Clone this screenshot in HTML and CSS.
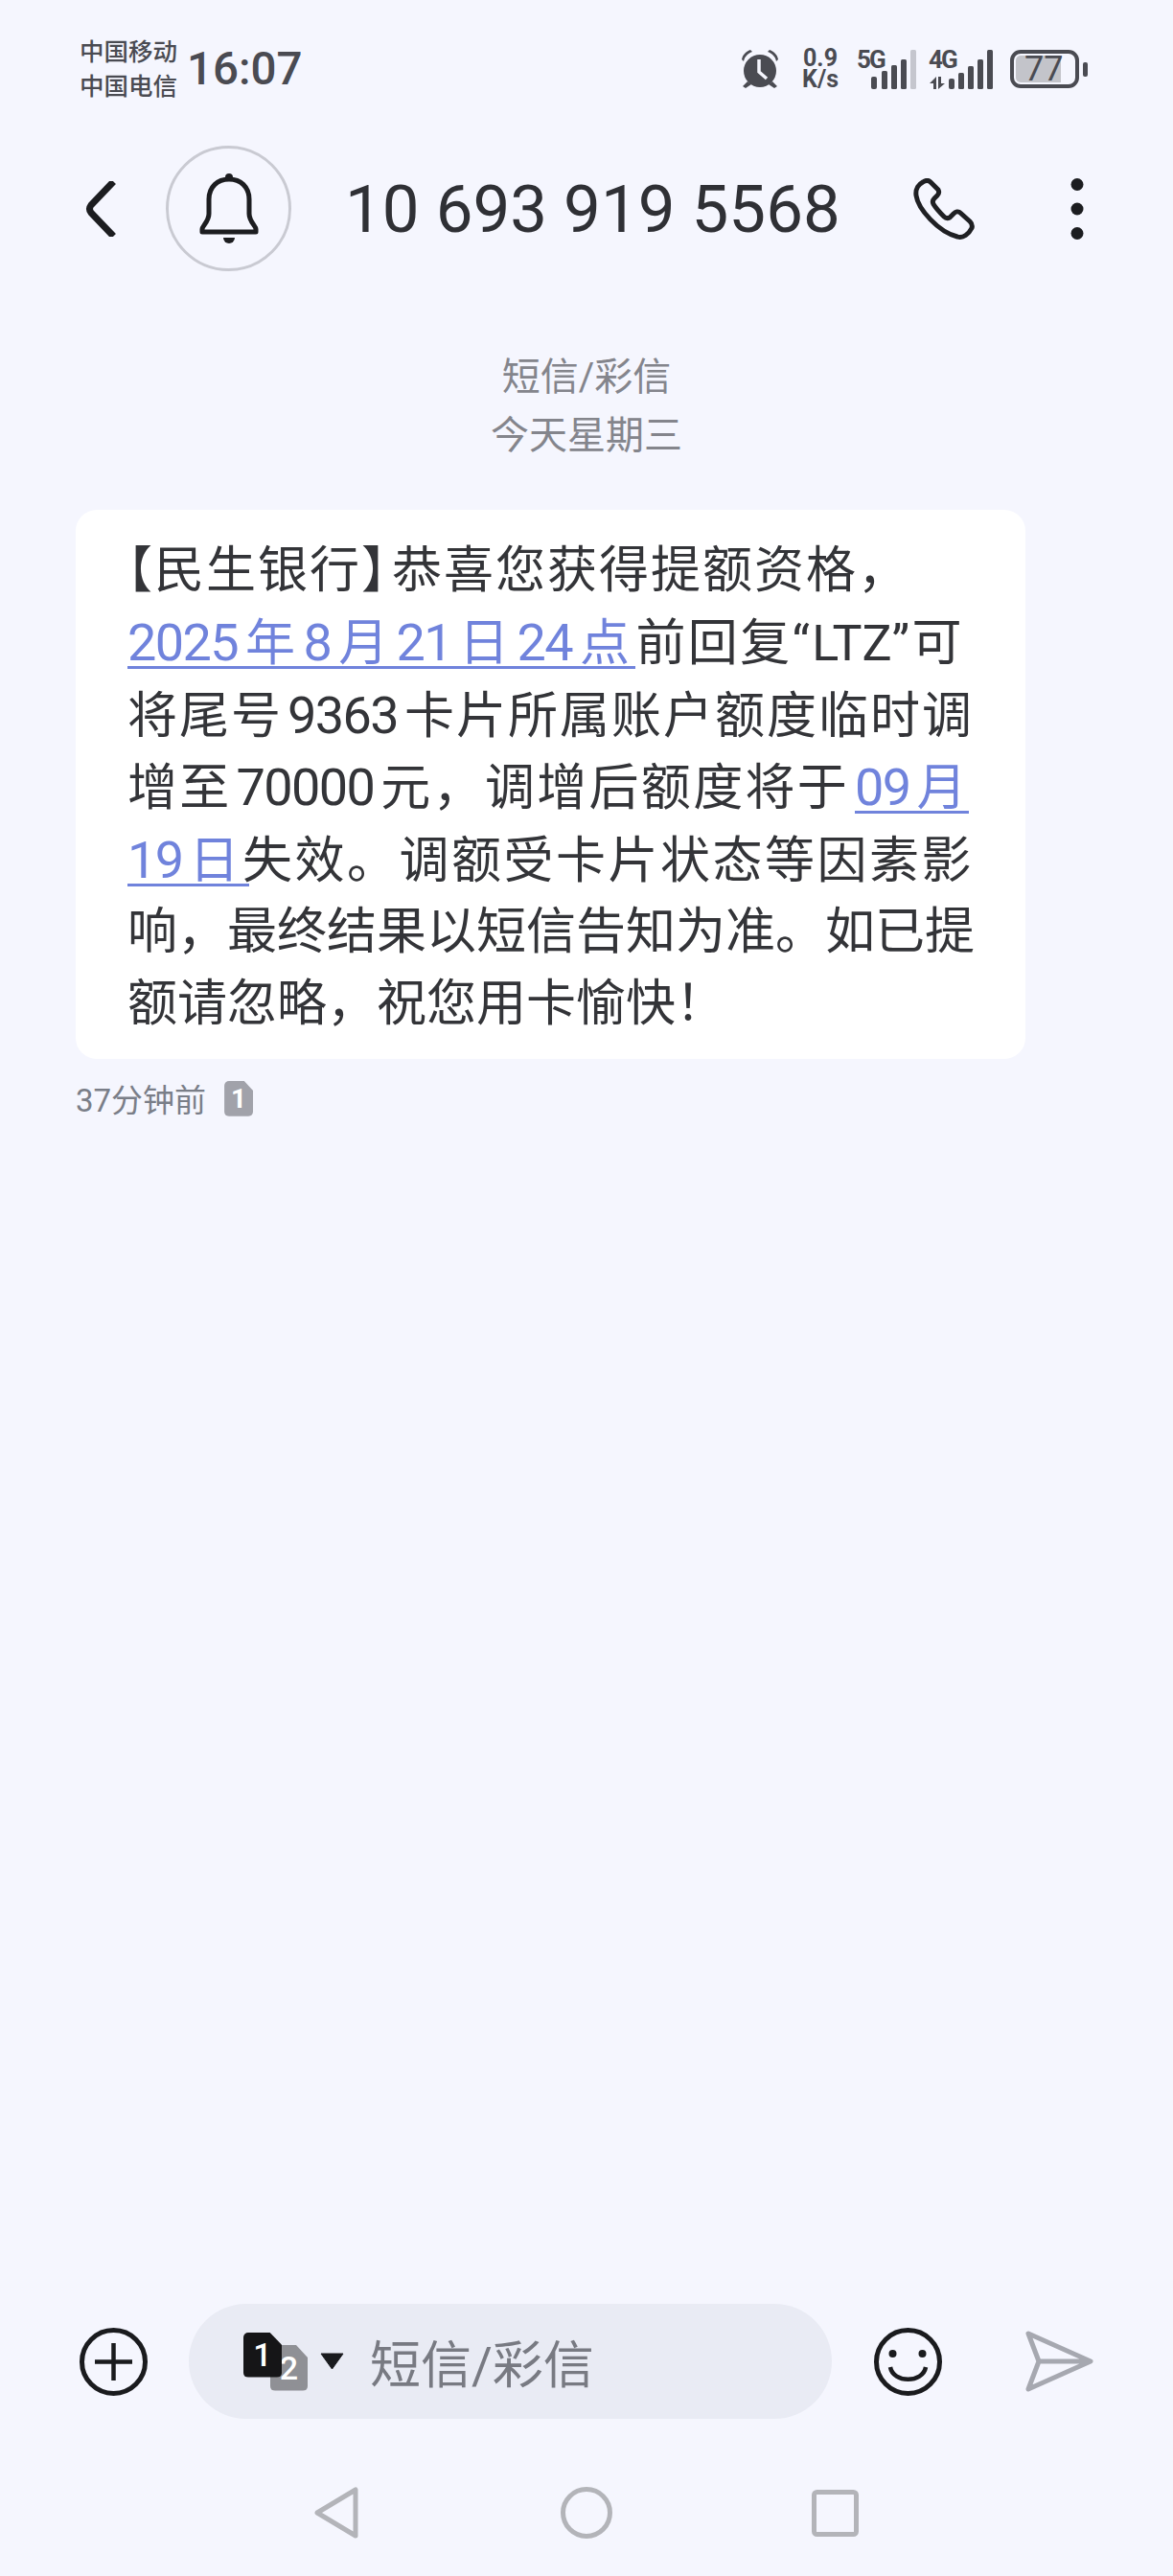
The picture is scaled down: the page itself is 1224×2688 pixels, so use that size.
FILE: index.html
```html
<!DOCTYPE html>
<html lang="zh-CN">
<head>
    <meta charset="UTF-8">
    <meta name="viewport" content="width=device-width, initial-scale=1.0">
    <title>短信</title>
    <link rel="stylesheet" href="styles.css">
</head>
<body>
    <div class="page">
        <div class="status-bar">
            <div class="carriers">
                <div>中国移动</div>
                <div>中国电信</div>
            </div>
            <div class="clock">16:07</div>
            <div class="status-icons">
                <svg class="icon-alarm" width="40" height="42" viewBox="0 0 40 42">
                    <circle cx="20" cy="23" r="17" fill="#4a4b52"/>
                    <path d="M1 11 C2 6 5 3 10 1 L12 3 C7 5 4 8 3 13 Z" fill="#4a4b52"/>
                    <path d="M39 11 C38 6 35 3 30 1 L28 3 C33 5 36 8 37 13 Z" fill="#4a4b52"/>
                    <path d="M7 34 L2 39 L5 41 L11 37 Z M33 34 L38 39 L35 41 L29 37 Z" fill="#4a4b52"/>
                    <path d="M19 11 V24 L27 31" fill="none" stroke="#f5f6fe" stroke-width="3.5"/>
                </svg>
                <div class="speed">
                    <div>0.9</div>
                    <div>K/s</div>
                </div>
                <div class="signal signal-5g">
                    <span class="net-label">5G</span>
                    <svg width="62" height="41" viewBox="0 0 62 41">
                        <rect x="15" y="28" width="6" height="13" rx="2" fill="#4a4b52"/>
                        <rect x="26" y="22" width="6" height="19" rx="1.5" fill="#4a4b52"/>
                        <rect x="36" y="16" width="6" height="25" rx="1.5" fill="#4a4b52"/>
                        <rect x="46" y="10" width="6" height="31" rx="1.5" fill="#4a4b52"/>
                        <rect x="56" y="0" width="6" height="41" rx="1.5" fill="#c5c6ce"/>
                    </svg>
                </div>
                <div class="signal signal-4g">
                    <span class="net-label">4G</span>
                    <svg width="67" height="41" viewBox="0 0 67 41">
                        <path d="M5 41 H8 V28 L1 35 H5 Z M10 28 H13 V35 H17 L10 41 Z" fill="#4a4b52"/>
                        <rect x="21" y="30" width="6" height="11" rx="2" fill="#4a4b52"/>
                        <rect x="31" y="24" width="6" height="17" rx="1.5" fill="#4a4b52"/>
                        <rect x="41" y="17" width="6" height="24" rx="1.5" fill="#4a4b52"/>
                        <rect x="51" y="10" width="6" height="31" rx="1.5" fill="#4a4b52"/>
                        <rect x="61" y="0" width="6" height="41" rx="1.5" fill="#4a4b52"/>
                    </svg>
                </div>
                <div class="battery">
                    <div class="battery-body">
                        <div class="battery-fill"></div>
                        <div class="battery-num">77</div>
                    </div>
                    <div class="battery-nub"></div>
                </div>
            </div>
        </div>

        <div class="header">
            <svg class="icon-back" width="32" height="58" viewBox="0 0 32 58">
                <path d="M27 3 L6 25 Q3 29 6 33 L27 55" fill="none" stroke="#1c1d20" stroke-width="7" stroke-linecap="square"/>
            </svg>
            <div class="avatar">
                <svg width="62" height="74" viewBox="0 0 62 74">
                    <circle cx="31" cy="4" r="4" fill="#1c1d20"/>
                    <path d="M3 61 H59 V58 C59 55 52 50 52 42 V27 C52 14 43 6 31 6 C19 6 10 14 10 27 V42 C10 50 3 55 3 58 Z" fill="none" stroke="#1c1d20" stroke-width="5" stroke-linejoin="round"/>
                    <path d="M25 67 H37 A6 6 0 0 1 25 67 Z" fill="#1c1d20"/>
                </svg>
            </div>
            <div class="phone-number">10 693 919 5568</div>
            <svg class="icon-call" width="64" height="64" viewBox="0 0 64 64">
                <path d="M10 4 C6 6 2 11 3 18 C5 32 26 56 46 61 C52 63 58 58 61 52 C62 49 61 47 59 45 L49 36 C47 34 44 35 42 37 L38 41 C36 42 34 42 32 40 C28 36 24 32 21 27 C20 25 20 23 22 21 L25 18 C27 16 27 14 26 12 L18 4 C16 2 13 2 10 4 Z" fill="none" stroke="#1f2023" stroke-width="5" stroke-linejoin="round"/>
            </svg>
            <svg class="icon-more" width="14" height="64" viewBox="0 0 14 64">
                <circle cx="7" cy="6.5" r="6.5" fill="#1c1d20"/>
                <circle cx="7" cy="32" r="6.5" fill="#1c1d20"/>
                <circle cx="7" cy="57.5" r="6.5" fill="#1c1d20"/>
            </svg>
        </div>

        <div class="thread">
            <div class="thread-info">
                <div>短信/彩信</div>
                <div>今天星期三</div>
            </div>
            <div class="bubble">
                <div class="line line-1"><span class="halt">【</span>民生银行<span class="halt close">】</span>恭喜您获得提额资格，</div>
                <div class="line line-2"><a class="link trail"><span class="num first">2025</span>年<span class="num">8</span>月<span class="num">21</span>日<span class="num">24</span>点</a>前回复“<span class="latin">LTZ</span>”可</div>
                <div class="line line-3">将尾号<span class="num">9363</span>卡片所属账户额度临时调</div>
                <div class="line line-4">增至<span class="num">70000</span>元，调增后额度将于<a class="link lead"><span class="num tight">09</span>月</a></div>
                <div class="line line-5"><a class="link trail-wide"><span class="num first">19</span>日</a>失效。调额受卡片状态等因素影</div>
                <div class="line line-6">响，最终结果以短信告知为准。如已提</div>
                <div class="line line-7">额请忽略，祝您用卡愉快！</div>
            </div>
            <div class="msg-meta">
                <span>37分钟前</span>
                <span class="sim sim-small">1</span>
            </div>
        </div>

        <div class="composer">
            <svg width="71" height="71" viewBox="0 0 71 71">
                <circle cx="35.5" cy="35.5" r="33" fill="none" stroke="#1a1b1e" stroke-width="5"/>
                <path d="M16 35.5 H55 M35.5 16 V55" fill="none" stroke="#1a1b1e" stroke-width="4.5"/>
            </svg>
            <div class="input-pill">
                <div class="sim-stack">
                    <span class="sim sim-two">2</span>
                    <span class="sim sim-one">1</span>
                </div>
                <svg class="caret" width="25" height="18" viewBox="0 0 25 18">
                    <path d="M1 1 H24 L12.5 17 Z" fill="#1a1b1e" stroke="#1a1b1e" stroke-width="1" stroke-linejoin="round"/>
                </svg>
                <div class="placeholder">短信/彩信</div>
            </div>
            <svg class="icon-smile" width="71" height="71" viewBox="0 0 71 71">
                <circle cx="35.5" cy="35.5" r="33" fill="none" stroke="#1a1b1e" stroke-width="5"/>
                <circle cx="19.5" cy="27" r="4" fill="#1a1b1e"/>
                <circle cx="50.5" cy="27" r="4" fill="#1a1b1e"/>
                <path d="M17 41 C20 58 51 58 54 41" fill="none" stroke="#1a1b1e" stroke-width="4.5"/>
            </svg>
            <svg class="icon-send" width="71" height="64" viewBox="0 0 71 64">
                <path d="M3 3 L68 32 L3 61 L14 32 Z M14 32 H68" fill="none" stroke="#a6a8b0" stroke-width="5" stroke-linejoin="round"/>
            </svg>
        </div>

        <div class="nav-bar">
            <svg width="46" height="54" viewBox="0 0 46 54">
                <path d="M43 3 V51 L3 27 Z" fill="none" stroke="#b3b4b9" stroke-width="5" stroke-linejoin="round"/>
            </svg>
            <svg class="nav-home" width="54" height="54" viewBox="0 0 54 54">
                <circle cx="27" cy="27" r="24.5" fill="none" stroke="#b3b4b9" stroke-width="5"/>
            </svg>
            <svg class="nav-recent" width="49" height="49" viewBox="0 0 49 49">
                <rect x="2.5" y="2.5" width="44" height="44" rx="3" fill="none" stroke="#b3b4b9" stroke-width="5"/>
            </svg>
        </div>
    </div>
</body>
</html>
```

FILE: styles.css
```css
body {
    margin: 0;
    background: #f5f6fe;
    font-family: Roboto, 'Noto Sans CJK SC', sans-serif;
}
.page {
    width: 1224px;
    height: 2688px;
    display: flex;
    flex-direction: column;
    overflow: hidden;
}

/* status bar */
.status-bar {
    display: flex;
    align-items: center;
    height: 72px;
    padding: 36px 89px 0 83px;
    color: #4a4b52;
}
.carriers {
    font-size: 25.5px;
    font-weight: 500;
    line-height: 36px;
}
.clock {
    margin-left: 10px;
    font-size: 47.5px;
    font-weight: 500;
}
.status-icons {
    display: flex;
    align-items: center;
    margin-left: auto;
}
.speed {
    margin-left: 21px;
    width: 44px;
    font-size: 25px;
    font-weight: 700;
    line-height: 22px;
    text-align: center;
}
.signal {
    position: relative;
    height: 41px;
}
.signal-5g {
    margin-left: 16px;
}
.signal-4g {
    margin-left: 13px;
}
.net-label {
    position: absolute;
    left: 0;
    top: 0;
    font-size: 26px;
    font-weight: 700;
    line-height: 20px;
    letter-spacing: -2px;
}
.battery {
    display: flex;
    align-items: center;
    margin-left: 18px;
}
.battery-body {
    position: relative;
    box-sizing: border-box;
    width: 72px;
    height: 40px;
    border: 4px solid #4a4b52;
    border-radius: 11px;
    padding: 2px;
}
.battery-fill {
    width: 47px;
    height: 100%;
    background: #c3c4ca;
    border-radius: 5px 0 0 5px;
}
.battery-num {
    position: absolute;
    left: 11px;
    top: 0;
    font-size: 36px;
    line-height: 32px;
}
.battery-nub {
    width: 5px;
    height: 15px;
    margin-left: 4px;
    background: #4a4b52;
    border-radius: 2px;
}

/* header */
.header {
    display: flex;
    align-items: center;
    height: 131px;
    margin-top: 44px;
    padding: 0 93px 0 89px;
}
.avatar {
    box-sizing: border-box;
    width: 131px;
    height: 131px;
    margin-left: 52px;
    border: 3px solid #c9cad2;
    border-radius: 50%;
    display: flex;
    align-items: center;
    justify-content: center;
}
.phone-number {
    margin-left: 56px;
    padding-top: 2px;
    font-size: 69px;
    color: #2f3035;
    white-space: nowrap;
}
.icon-call {
    margin-left: auto;
}
.icon-more {
    margin-left: 100px;
}

/* thread */
.thread {
    flex: 1;
    padding: 0 79px;
}
.thread-info {
    margin-top: 80px;
    text-align: center;
    font-size: 40px;
    line-height: 61px;
    color: #84858c;
}
.bubble {
    box-sizing: border-box;
    width: 991px;
    margin-top: 47px;
    padding: 26px 0 19px 54px;
    background: #fff;
    border-radius: 22px;
    font-size: 52px;
    color: #333438;
    white-space: nowrap;
}
.line {
    height: 75.4px;
    line-height: 75.4px;
}
/* the phone justifies each line, so the gaps differ a little */
.line-1 { letter-spacing: 2px; }
.line-2 { letter-spacing: 2.4px; }
.line-3 { letter-spacing: 2px; }
.line-4 { letter-spacing: 2.3px; }
.line-5 { letter-spacing: 2.5px; }
.line-6 { letter-spacing: 0; }
.line-7 { letter-spacing: 0; }
.halt {
    font-feature-settings: "halt";
}
.close {
    margin-right: 4px;
}
.num {
    padding: 0 7px 0 5px;
    font-size: 54px;
    letter-spacing: -1.6px;
}
.line-2 .num {
    padding: 0 8px 0 6px;
}
.num.first {
    margin-left: -6px;
    padding-left: 6px;
}
.num.tight {
    padding-left: 0;
}
.latin {
    letter-spacing: 0;
}
/* drawn as a background so it runs unbroken under the digit gaps */
.link {
    color: #7083dc;
    background: linear-gradient(#7083dc, #7083dc) no-repeat 0 calc(100% - 4px) / 100% 3px;
}
.link.trail {
    padding-right: 4px;
}
.link.trail-wide {
    padding-right: 8px;
    margin-right: -7px;
}
.link.lead {
    margin-left: 6px;
}
.msg-meta {
    display: flex;
    align-items: center;
    height: 43px;
    margin-top: 20px;
    font-size: 33px;
    color: #7a7e88;
}
.sim {
    display: flex;
    align-items: center;
    justify-content: center;
    color: #fff;
    font-weight: 700;
    border-radius: 5px;
    clip-path: polygon(0 0, 68% 0, 100% 28%, 100% 100%, 0 100%);
}
.sim-small {
    width: 30px;
    height: 37px;
    margin-left: 19px;
    background: #a1a2aa;
    font-size: 28px;
}

/* input row */
.composer {
    display: flex;
    align-items: center;
    padding-left: 83px;
}
.input-pill {
    display: flex;
    align-items: center;
    box-sizing: border-box;
    width: 671px;
    height: 120px;
    margin-left: 43px;
    padding-left: 57px;
    background: #e9ebf4;
    border-radius: 60px;
}
.sim-stack {
    position: relative;
    width: 67px;
    height: 61px;
}
.sim-stack .sim {
    position: absolute;
    font-size: 34px;
    font-weight: 500;
}
.sim-one {
    left: 0;
    top: 0;
    width: 40px;
    height: 47px;
    background: #151517;
}
.sim-two {
    left: 28px;
    top: 13px;
    width: 39px;
    height: 48px;
    background: #8f9095;
}
.caret {
    margin-left: 13px;
}
.placeholder {
    margin-left: 27px;
    font-size: 53px;
    color: #787a82;
}
.icon-smile {
    margin-left: 44px;
}
.icon-send {
    margin-left: 87px;
}

/* navigation */
.nav-bar {
    display: flex;
    align-items: center;
    height: 54px;
    margin-top: 71px;
    padding: 0 0 39px 328px;
}
.nav-home {
    margin-left: 211px;
}
.nav-recent {
    margin-left: 208px;
}
```
